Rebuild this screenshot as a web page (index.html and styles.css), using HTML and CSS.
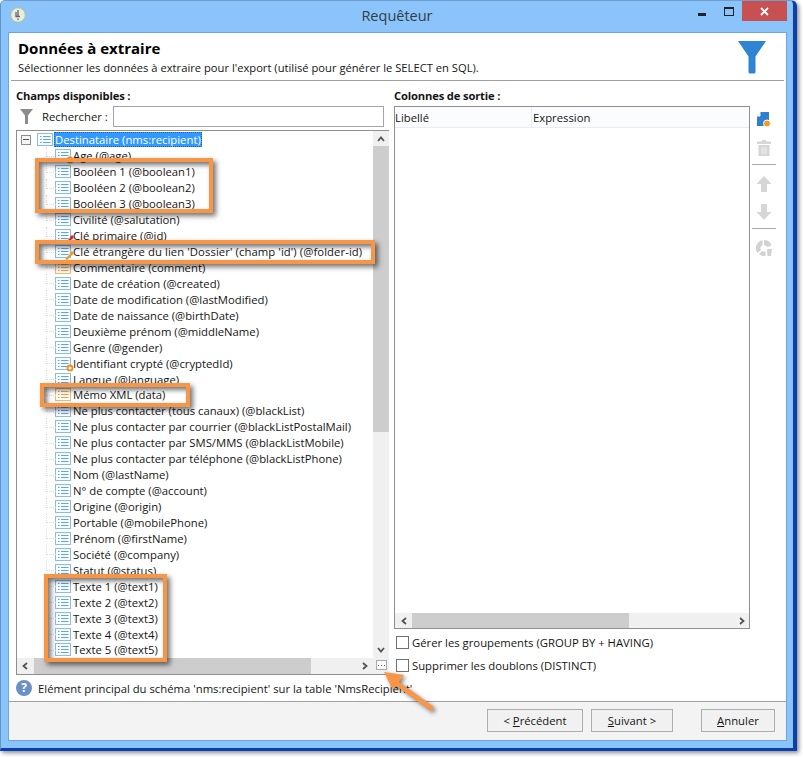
FILE: index.html
```html
<!DOCTYPE html>
<html lang="fr">
<head>
<meta charset="utf-8">
<title>Requêteur</title>
<link rel="stylesheet" href="styles.css">
</head>
<body>
<svg class="defs" width="0" height="0">
  <symbol id="list" viewBox="0 0 16 13">
    <rect x=".5" y=".5" width="15" height="12" fill="#f8fbff" stroke="#8dbbe8"/>
    <path d="M3 3.500h1.500M3 6.500h1.500M3 9.500h1.500M6 3.500h7.500M6 6.500h7.500M6 9.500h7.500" stroke="#5aa5ec" fill="none"/>
  </symbol>
  <symbol id="listo" viewBox="0 0 16 13">
    <rect x=".5" y=".5" width="15" height="12" fill="#fffbf3" stroke="#f0b873"/>
    <path d="M3 3.500h1.500M3 6.500h1.500M3 9.500h1.500M6 3.500h7.500M6 6.500h7.500M6 9.500h7.500" stroke="#eca04a" fill="none"/>
  </symbol>
  <symbol id="chev-l" viewBox="0 0 8 8"><path d="M6 1 2.500 4 6 7" fill="none" stroke="#555" stroke-width="1.800"/></symbol>
  <symbol id="chev-r" viewBox="0 0 8 8"><path d="M2 1l3.500 3L2 7" fill="none" stroke="#555" stroke-width="1.800"/></symbol>
  <symbol id="chev-u" viewBox="0 0 8 8"><path d="M1 6l3-3.500L7 6" fill="none" stroke="#555" stroke-width="1.800"/></symbol>
  <symbol id="chev-d" viewBox="0 0 8 8"><path d="M1 2l3 3.500L7 2" fill="none" stroke="#555" stroke-width="1.800"/></symbol>
</svg>

<div class="window">
  <header class="titlebar">
    <svg class="app-icon" viewBox="0 0 16 16" width="16" height="16"><circle cx="8" cy="8" r="7.300" fill="#e9ece4" stroke="#a8c48c"/><path d="M8 3v7M6 5v4.500h4M8 11.500v1.500" stroke="#666" stroke-width="1.300" fill="none"/></svg>
    <div class="title">Requêteur</div>
    <div class="controls">
      <span class="ctl-min"></span>
      <span class="ctl-max"></span>
      <span class="ctl-close"><svg viewBox="0 0 9 9" width="9" height="9"><path d="M1 1l7 7M8 1 1 8" stroke="#fff" stroke-width="1.800"/></svg></span>
    </div>
  </header>

  <div class="client">
    <section class="banner">
      <div>
        <h1 class="banner-title">Données à extraire</h1>
        <p class="banner-sub">Sélectionner les données à extraire pour l'export (utilisé pour générer le SELECT en SQL).</p>
      </div>
      <svg class="banner-icon" viewBox="0 0 28 33" width="28" height="33"><path d="M0 0h28L17.500 15.500V31q0 1.500-1.500 1.500h-4Q10.500 32.500 10.500 31V15.500Z" fill="#2f85d3"/></svg>
    </section>

    <div class="panes">
      <div class="pane-left">
        <div class="pane-label">Champs disponibles :</div>
        <div class="search">
          <svg viewBox="0 0 13 15" width="13" height="15"><path d="M0 0h13L8 6.500V15H5V6.500Z" fill="#8c8c8c"/></svg>
          <label class="search-label">Rechercher :</label>
          <div class="search-input"></div>
        </div>
        <div class="tree">
          <div class="tree-view">
            <div class="row root"><span class="expander"></span><svg class="ico root-ico" width="16" height="13"><use href="#list"/></svg><span class="sel">Destinataire (nms:recipient)</span></div>
            <div class="row"><span class="wrap"><svg class="ico" width="16" height="13"><use href="#list"/></svg><svg class="badge" viewBox="0 0 8 8" width="8" height="8"><circle cx="4" cy="4" r="2.500" fill="#fff" stroke="#ef8f1f" stroke-width="2"/></svg></span>Age (@age)</div>
            <div class="row"><svg class="ico" width="16" height="13"><use href="#list"/></svg>Booléen 1 (@boolean1)</div>
            <div class="row"><svg class="ico" width="16" height="13"><use href="#list"/></svg>Booléen 2 (@boolean2)</div>
            <div class="row"><svg class="ico" width="16" height="13"><use href="#list"/></svg>Booléen 3 (@boolean3)</div>
            <div class="row"><svg class="ico" width="16" height="13"><use href="#list"/></svg>Civilité (@salutation)</div>
            <div class="row"><span class="wrap"><svg class="ico" width="16" height="13"><use href="#list"/></svg><svg class="badge" viewBox="0 0 8 8" width="9" height="9"><path d="M1 7.500 6 2.500" stroke="#d8232a" stroke-width="2"/><circle cx="6.300" cy="1.800" r="1.500" fill="#d8232a"/></svg></span>Clé primaire (@id)</div>
            <div class="row row-wide"><span class="wrap"><svg class="ico" width="16" height="13"><use href="#list"/></svg><svg class="badge" viewBox="0 0 8 8" width="9" height="9"><path d="M1 7.500 6 2.500" stroke="#ef9a1f" stroke-width="2"/><circle cx="6.300" cy="1.800" r="1.500" fill="#ef9a1f"/></svg></span>Clé étrangère du lien 'Dossier' (champ 'id') (@folder-id)</div>
            <div class="row"><svg class="ico" width="16" height="13"><use href="#listo"/></svg>Commentaire (comment)</div>
            <div class="row"><svg class="ico" width="16" height="13"><use href="#list"/></svg>Date de création (@created)</div>
            <div class="row"><svg class="ico" width="16" height="13"><use href="#list"/></svg>Date de modification (@lastModified)</div>
            <div class="row"><svg class="ico" width="16" height="13"><use href="#list"/></svg>Date de naissance (@birthDate)</div>
            <div class="row"><svg class="ico" width="16" height="13"><use href="#list"/></svg>Deuxième prénom (@middleName)</div>
            <div class="row"><svg class="ico" width="16" height="13"><use href="#list"/></svg>Genre (@gender)</div>
            <div class="row"><span class="wrap"><svg class="ico" width="16" height="13"><use href="#list"/></svg><svg class="badge" viewBox="0 0 8 8" width="8" height="8"><circle cx="4" cy="4" r="2.500" fill="#fff" stroke="#ef8f1f" stroke-width="2"/></svg></span>Identifiant crypté (@cryptedId)</div>
            <div class="row"><svg class="ico" width="16" height="13"><use href="#list"/></svg>Langue (@language)</div>
            <div class="row"><svg class="ico" width="16" height="13"><use href="#listo"/></svg>Mémo XML (data)</div>
            <div class="row"><svg class="ico" width="16" height="13"><use href="#list"/></svg>Ne plus contacter (tous canaux) (@blackList)</div>
            <div class="row"><svg class="ico" width="16" height="13"><use href="#list"/></svg>Ne plus contacter par courrier (@blackListPostalMail)</div>
            <div class="row"><svg class="ico" width="16" height="13"><use href="#list"/></svg>Ne plus contacter par SMS/MMS (@blackListMobile)</div>
            <div class="row"><svg class="ico" width="16" height="13"><use href="#list"/></svg>Ne plus contacter par téléphone (@blackListPhone)</div>
            <div class="row"><svg class="ico" width="16" height="13"><use href="#list"/></svg>Nom (@lastName)</div>
            <div class="row"><svg class="ico" width="16" height="13"><use href="#list"/></svg>N° de compte (@account)</div>
            <div class="row"><svg class="ico" width="16" height="13"><use href="#list"/></svg>Origine (@origin)</div>
            <div class="row"><svg class="ico" width="16" height="13"><use href="#list"/></svg>Portable (@mobilePhone)</div>
            <div class="row"><svg class="ico" width="16" height="13"><use href="#list"/></svg>Prénom (@firstName)</div>
            <div class="row"><svg class="ico" width="16" height="13"><use href="#list"/></svg>Société (@company)</div>
            <div class="row"><svg class="ico" width="16" height="13"><use href="#list"/></svg>Statut (@status)</div>
            <div class="row"><svg class="ico" width="16" height="13"><use href="#list"/></svg>Texte 1 (@text1)</div>
            <div class="row"><svg class="ico" width="16" height="13"><use href="#list"/></svg>Texte 2 (@text2)</div>
            <div class="row"><svg class="ico" width="16" height="13"><use href="#list"/></svg>Texte 3 (@text3)</div>
            <div class="row"><svg class="ico" width="16" height="13"><use href="#list"/></svg>Texte 4 (@text4)</div>
            <div class="row"><svg class="ico" width="16" height="13"><use href="#list"/></svg>Texte 5 (@text5)</div>
          </div>
          <div class="vbar">
            <svg width="8" height="8"><use href="#chev-u"/></svg>
            <div class="vthumb"></div>
            <svg width="8" height="8"><use href="#chev-d"/></svg>
          </div>
          <div class="hbar">
            <svg width="8" height="8"><use href="#chev-l"/></svg>
            <div class="hthumb"></div>
            <svg width="8" height="8"><use href="#chev-r"/></svg>
          </div>
          <div class="corner"><span class="more"></span></div>
        </div>
      </div>

      <div class="pane-right">
        <div class="pane-label">Colonnes de sortie :</div>
        <div class="table">
          <div class="thead"><div class="th th-1">Libellé</div><div class="th">Expression</div></div>
          <div class="tbody"></div>
          <div class="hbar hbar-table">
            <svg width="8" height="8"><use href="#chev-l"/></svg>
            <div class="hthumb hthumb-table"></div>
            <svg width="8" height="8"><use href="#chev-r"/></svg>
          </div>
        </div>
        <div class="checks">
          <label class="check"><span class="box"></span>Gérer les groupements (GROUP BY + HAVING)</label>
          <label class="check"><span class="box"></span>Supprimer les doublons (DISTINCT)</label>
        </div>
      </div>

      <div class="tools">
        <svg class="tool" viewBox="0 0 14 16" width="14" height="16"><path d="M4 0h8v9H10v5H0V4Z" fill="#2f7fd0"/><path d="M3 1v3H0" fill="#fff" stroke="#fff"/><circle cx="10" cy="11.500" r="3.500" fill="#f59a1e" stroke="#fff"/></svg>
        <svg class="tool" viewBox="0 0 14 16" width="14" height="16"><path d="M5 0h4v1.500h5V4H0V1.500h5ZM1.500 5h11v11h-11Z" fill="#d6d6d6"/><path d="M5 7v7M7 7v7M9 7v7" stroke="#eee"/></svg>
        <div class="tool-sep"></div>
        <svg class="tool" viewBox="0 0 16 16" width="16" height="16"><path d="M8 0l7.500 8H11v8H5V8H.5Z" fill="#d6d6d6"/></svg>
        <svg class="tool" viewBox="0 0 16 16" width="16" height="16"><path d="M8 16 .5 8H5V0h6v8h4.500Z" fill="#d6d6d6"/></svg>
        <div class="tool-sep"></div>
        <svg class="tool" viewBox="0 0 16 16" width="16" height="16"><path d="M8 0a8 8 0 0 1 7.500 5.500L11 7a3.300 3.300 0 0 0-3-2ZM6.500 .2v5A3.300 3.300 0 0 0 5 10l-3.500 3A8 8 0 0 1 6.500 .2ZM3 14l3.500-3a3.300 3.300 0 0 0 3 .3V16A8 8 0 0 1 3 14ZM11 9h5l-1 7h-3.500Z" fill="#d2d2d2"/></svg>
      </div>
    </div>

    <div class="status">
      <span class="help">?</span>
      <span>Elément principal du schéma 'nms:recipient' sur la table 'NmsRecipient'</span>
    </div>

    <footer class="footer">
      <button class="btn btn-prev">&lt; <u>P</u>récédent</button>
      <button class="btn btn-next"><u>S</u>uivant &gt;</button>
      <button class="btn btn-cancel"><u>A</u>nnuler</button>
    </footer>
  </div>
</div>

<div class="mark mark-1"></div>
<div class="mark mark-2"></div>
<div class="mark mark-3"></div>
<div class="mark mark-4"></div>
<svg class="arrow" viewBox="0 0 60 50" width="60" height="50">
  <path d="M50 38 14 12" stroke="#f79646" stroke-width="5" stroke-linecap="round" fill="none"/>
  <path d="M3 2 23 5 12 20Z" fill="#f79646"/>
</svg>
</body>
</html>
```

FILE: styles.css
```css
* { box-sizing: border-box; }
html, body { margin: 0; padding: 0; }
body {
  width: 803px;
  height: 757px;
  overflow: hidden;
  background: #fff;
  font-family: "Open Sans", "Noto Sans", sans-serif;
  font-size: 11.3px;
  color: #151515;
  position: relative;
}
.defs { position: absolute; }

.window {
  width: 797px;
  height: 751px;
  background: #8ac4fa;
  border-right: 4px solid #0b3fb0;
  border-bottom: 3px solid #0b3fb0;
  border-top: 1px solid #6f9fd0;
  border-left: 1px solid #5e94c8;
  border-radius: 5px 6px 0 0;
  box-shadow: 2px 2px 4px rgba(0, 0, 0, .45);
  display: flex;
  flex-direction: column;
}

.titlebar {
  height: 31px;
  flex: none;
  display: flex;
  align-items: flex-start;
  position: relative;
  padding-left: 9px;
}
.app-icon { margin-top: 6px; }
.title {
  position: absolute;
  left: 0;
  right: 0;
  top: 5px;
  text-align: center;
  font-size: 14.5px;
  line-height: 20px;
  color: #333c48;
}
.controls {
  margin-left: auto;
  margin-right: 6px;
  display: flex;
  align-items: flex-start;
}
.ctl-min { width: 8px; height: 3px; background: #222; margin-top: 12px; margin-right: 18px; }
.ctl-max { width: 10px; height: 9px; border: 1px solid #222; border-top-width: 2px; margin-top: 6px; margin-right: 8px; }
.ctl-close {
  width: 45px;
  height: 20px;
  background: #c75050;
  display: flex;
  align-items: center;
  justify-content: center;
}

.client {
  margin: 0 6px 7px 7px;
  flex: 1;
  background: #fff;
  border: 1px solid #6ea5da;
  display: flex;
  flex-direction: column;
  min-height: 0;
}

.banner {
  height: 48px;
  flex: none;
  margin: 0 2px;
  padding: 5px 18px 0 7px;
  border-bottom: 1px solid #a0a0a0;
  display: flex;
  justify-content: space-between;
  align-items: flex-start;
}
.banner-title { margin: 0; font-size: 15px; line-height: 20px; font-weight: 700; color: #000; }
.banner-sub { margin: 2px 0 0; font-size: 11.2px; line-height: 16px; }
.banner-icon { margin-top: 3px; }

.panes {
  flex: 1;
  min-height: 0;
  display: flex;
  padding-left: 7px;
}
.pane-left { width: 373px; flex: none; display: flex; flex-direction: column; }
.pane-right { width: 356px; flex: none; margin-left: 5px; display: flex; flex-direction: column; }
.pane-label { height: 25px; flex: none; padding-top: 7px; font-size: 11.2px; font-weight: 700; line-height: 16px; letter-spacing: -.15px; }

.search { height: 21px; flex: none; display: flex; align-items: center; padding-left: 4px; padding-right: 5px; }
.search-label { margin-left: 9px; width: 71px; flex: none; }
.search-input { flex: 1; height: 21px; border: 1px solid #a6a6a6; background: #fff; }

.tree {
  margin-top: 3px;
  flex: 1;
  min-height: 0;
  border: 1px solid #8e8f8f;
  display: grid;
  grid-template-columns: 356px 16px;
  grid-template-rows: 527px 16px;
}
.tree-view { overflow: hidden; padding-top: 1px; min-height: 0; background: #fff; }
.row {
  height: 15.95px;
  display: flex;
  align-items: center;
  white-space: nowrap;
  padding-left: 38px;
  position: relative;
  line-height: 15px;
}
.row-wide { letter-spacing: .08px; }
.row::before {
  content: "";
  position: absolute;
  left: 29px;
  top: -1px;
  bottom: 7px;
  width: 9px;
  border-left: 1px dotted #dcdcdc;
  border-bottom: 1px dotted #dcdcdc;
}
.root::before { display: none; }
.ico { flex: none; margin-right: 2px; }
.wrap { position: relative; display: flex; flex: none; }
.badge { position: absolute; right: -1px; bottom: -2px; }
.root { padding-left: 4px; }
.expander {
  width: 10px;
  height: 10px;
  flex: none;
  border: 1px solid #8d8d8d;
  margin-right: 6px;
  background: linear-gradient(#555, #555) center / 6px 1px no-repeat #f4f4f4;
}
.root-ico { margin-right: 1px; }
.sel {
  background: #3399ff;
  color: #fff;
  outline: 1px dotted #1a5fb0;
  outline-offset: -1px;
  padding: 0 1px;
  line-height: 15px;
}

.vbar, .hbar { background: #f0f0f0; display: flex; align-items: center; }
.vbar { flex-direction: column; justify-content: space-between; padding: 4px 0; min-height: 0; position: relative; }
.vthumb { position: absolute; left: 0; right: 0; top: 15px; height: 286px; background: #cdcdcd; }
.hbar { padding: 0 4px; position: relative; justify-content: space-between; }
.hthumb { position: absolute; left: 17px; top: 0; bottom: 0; width: 277px; background: #cdcdcd; }
.corner { background: #f0f0f0; display: flex; align-items: flex-start; justify-content: center; padding-top: 2px; }
.more {
  width: 11px;
  height: 10px;
  border: 1px solid #aaa;
  background: repeating-linear-gradient(90deg, #555 0 1px, transparent 1px 3px) center / 7px 1px no-repeat #fafafa;
}

.table { height: 523px; flex: none; border: 1px solid #8e8f8f; display: flex; flex-direction: column; }
.thead { height: 21px; flex: none; display: flex; background: #fbfcfe; border-bottom: 1px solid #e6edf6; line-height: 22px; }
.th-1 { width: 137px; border-right: 1px solid #e6edf6; flex: none; margin-right: 1px; }
.tbody { flex: 1; }
.hbar-table { height: 15px; flex: none; padding: 0 3px 0 5px; }
.hthumb-table { left: 17px; width: 217px; }

.checks { padding-top: 7px; display: flex; flex-direction: column; gap: 10px; }
.check { display: flex; align-items: center; height: 13px; padding-left: 2px; }
.box { width: 13px; height: 13px; flex: none; border: 1px solid #707070; background: #fff; margin-right: 3px; }

.tools {
  width: 28px;
  flex: none;
  padding-top: 31px;
  display: flex;
  flex-direction: column;
  align-items: center;
}
.tool { flex: none; margin-bottom: 12px; }
.tool-sep { width: 24px; height: 1px; background: #a8a8a8; margin: -4px 0 11px; }

.status {
  height: 26px;
  flex: none;
  padding-left: 7px;
  display: flex;
  align-items: center;
  gap: 6px;
  white-space: nowrap;
}
.help {
  width: 16px;
  height: 16px;
  border-radius: 50%;
  background: #6b90c6;
  color: #fff;
  font-weight: 700;
  font-size: 12px;
  line-height: 16px;
  text-align: center;
  flex: none;
}

.footer {
  height: 39px;
  flex: none;
  background: #f3f3f3;
  border-top: 1px solid #a0a0a0;
  display: flex;
  align-items: flex-start;
  padding: 7px 11px 0 0;
  justify-content: flex-end;
}
.btn {
  height: 23px;
  border: 1px solid #adadad;
  background: #f1f1f1;
  font: inherit;
  color: #151515;
  padding: 0;
}
.btn-prev { width: 96px; }
.btn-next { width: 82px; margin-left: 8px; }
.btn-cancel { width: 74px; margin-left: 28px; }

.mark {
  position: absolute;
  border: 4px solid #f79646;
  box-shadow: 3px 3px 5px rgba(0, 0, 0, .55), inset 3px 3px 5px rgba(0, 0, 0, .55);
}
.mark-1 { left: 35px; top: 158px; width: 178px; height: 55px; }
.mark-2 { left: 35px; top: 240px; width: 340px; height: 24px; }
.mark-3 { left: 40px; top: 383px; width: 150px; height: 24px; }
.mark-4 { left: 44px; top: 574px; width: 123px; height: 88px; }
.arrow {
  position: absolute;
  left: 381px;
  top: 670px;
  filter: drop-shadow(2px 2px 2px rgba(0, 0, 0, .5));
}
```
